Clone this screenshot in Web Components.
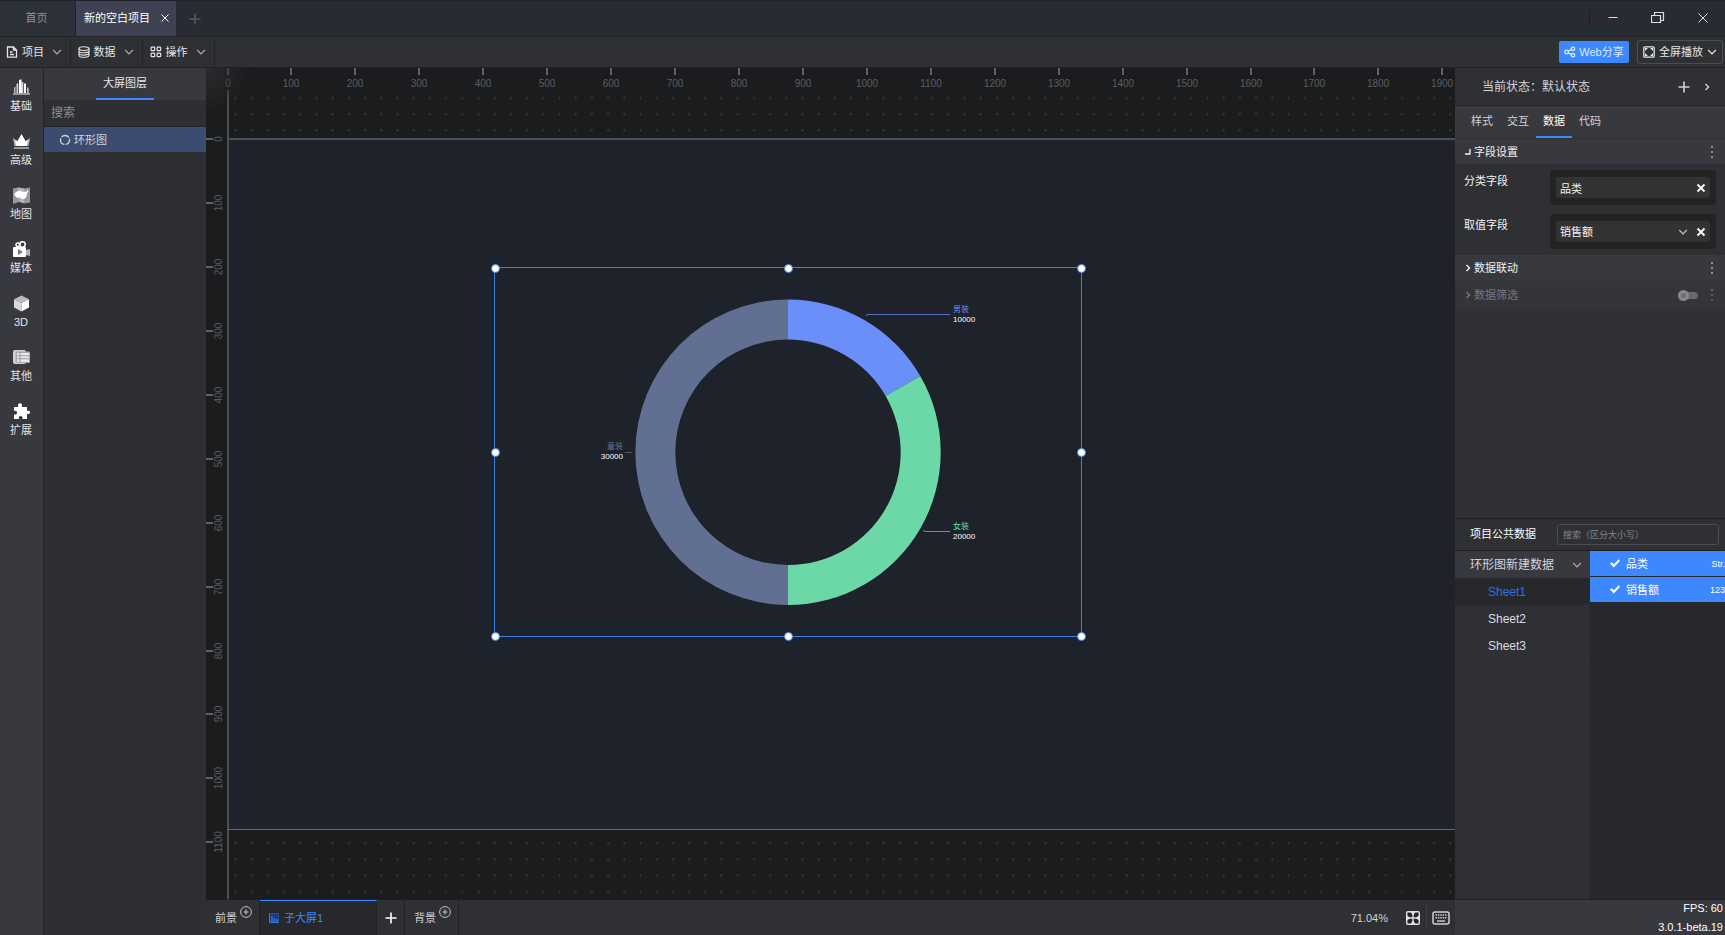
<!DOCTYPE html>
<html lang="zh-CN">
<head>
<meta charset="utf-8">
<meta name="viewport" content="width=device-width, initial-scale=1">
<title>新的空白项目</title>
<style>
  :root {
    --line: #232427;
    --panel: #2f3033;
    --raised: #38393f;
    --sunken: #27282c;
    --blue: #3d88ff;
    --dim: #8b8c90;
  }
  html, body {
    height: 100%;
    margin: 0;
    background: #2f3033;
    color: #d2d3d5;
    font: 11px/16px "Liberation Sans", "Noto Sans CJK SC", sans-serif;
  }
</style>
</head>
<body>
<app-shell>
  <title-bar slot="title"></title-bar>
  <tool-bar slot="tools"></tool-bar>
  <side-rail slot="rail"></side-rail>
  <layer-panel slot="layers"></layer-panel>
  <stage-view slot="stage">
    <select-frame><ring-chart></ring-chart></select-frame>
  </stage-view>
  <screen-tabs slot="screens"></screen-tabs>
  <props-panel slot="props"></props-panel>
  <data-panel slot="data"></data-panel>
  <status-box slot="status"></status-box>
</app-shell>

<script>
(function() {

  // name: [width, height, markup]
  const ICONS = {
    close: [10, 10, '<path d="M1.5 1.5l7 7M8.5 1.5l-7 7" fill="none" stroke="currentColor"/>'],
    exit: [12, 12, '<path d="M1.5 1.5l9 9M10.5 1.5l-9 9" fill="none" stroke="currentColor"/>'],
    cross: [10, 10, '<path d="M1.5 1.5l7 7M8.5 1.5l-7 7" fill="none" stroke="currentColor" stroke-width="2"/>'],
    plus: [12, 12, '<path d="M6 .5v11M.5 6h11" fill="none" stroke="currentColor" stroke-width="1.6"/>'],
    down: [10, 10, '<path d="M1.2 3l3.8 4 3.8-4" fill="none" stroke="currentColor" stroke-width="1.2"/>'],
    right: [6, 8, '<path d="M1.5 1l3 3-3 3" fill="none" stroke="currentColor" stroke-width="1.4"/>'],
    corner: [6, 8, '<path d="M5 1v5H0" fill="none" stroke="currentColor" stroke-width="1.4"/>'],
    more: [4, 12, '<g fill="currentColor"><rect x="1" y="0" width="2" height="2"/><rect x="1" y="5" width="2" height="2"/><rect x="1" y="10" width="2" height="2"/></g>'],
    min: [12, 12, '<path d="M1.5 5.5h9" stroke="currentColor"/>'],
    restore: [14, 14, '<path d="M.5 4.5h9v7h-9zM3.5 4V1.5h9v8H10" fill="none" stroke="currentColor" stroke-width="1.2"/>'],
    file: [12, 12, '<path d="M1.5 1h6l3 3v7.2h-9zM7.5 1v3h3M4 6h2.5M4 8.5h4" fill="none" stroke="currentColor" stroke-width="1.3"/>'],
    db: [12, 12, '<g fill="none" stroke="currentColor" stroke-width="1.1"><ellipse cx="6" cy="2.6" rx="5" ry="1.9"/><path d="M1 2.6v6.8c0 1 2.2 1.9 5 1.9s5-.9 5-1.9V2.6M1 5c0 1 2.2 1.8 5 1.8S11 6 11 5M1 7.3c0 1 2.2 1.8 5 1.8s5-.8 5-1.8"/></g>'],
    grid: [12, 12, '<g fill="none" stroke="currentColor" stroke-width="1.2"><rect x="1.1" y="1.1" width="3.6" height="3.6" rx=".8"/><rect x="7.1" y="1.1" width="3.6" height="3.6" rx=".8"/><rect x="1.1" y="7.1" width="3.6" height="3.6" rx=".8"/><rect x="7.1" y="7.1" width="3.6" height="3.6" rx=".8"/></g>'],
    share: [12, 12, '<g fill="none" stroke="currentColor" stroke-width="1.3"><circle cx="2.6" cy="6" r="1.8"/><circle cx="9" cy="2.8" r="1.7"/><circle cx="9" cy="9.2" r="1.7"/><path d="M4.2 5.2l3.2-1.6M4.2 6.8l3.2 1.6"/></g>'],
    full: [12, 12, '<rect x=".8" y=".8" width="10.4" height="10.4" rx="1" fill="none" stroke="currentColor" stroke-width="1.3"/><path fill="currentColor" d="M2 2h3L2 5zM10 2v3L7 2zM2 10V7l3 3zM10 10H7l3-3z"/>'],
    bars: [17, 17, '<path fill="#b9babd" d="M1 8.5l1.5-1V14H1zM14 8l1.8 1.5V14H14z"/><path fill="#d4d5d7" d="M3.5 5L5.2 4v10H3.5zM8.7 3h1.6v11H8.700z"/><path fill="#fff" d="M6 1.5L7 .5h1.5L9 14H6zM11 4.5h2V14h-2z"/><path fill="#98999d" d="M0 14h17v2H0z"/>'],
    crown: [17, 17, '<path fill="#b9babd" d="M0 5l4.5 3.5L8.5 3l4 5.5L17 5l-1.5 8h-14z"/><path fill="#fff" d="M8.5 1l4 7 2.5-1-1.5 6H3.5L2 7l2.5 1z"/><path fill="#98999d" d="M1 14h15v2H1z"/>'],
    map: [17, 17, '<path fill="#98999c" d="M0 1.5l5-1 6 1 6-1v15l-6 1-5-1.5-6 2z"/><path fill="#b4b5b8" d="M5 .5l6 1V16l-5-1.5z"/><path fill="#fff" d="M2.5 5.5l3-2 2.5.5 2 1 2-.5 1 .5 1.5-2 1 1.5-1.5 2-.5 3-2 2.5h-3l-1-1.5-3 .5-2.5-2-1-2z"/>'],
    media: [17, 17, '<g fill="none" stroke="#fff" stroke-width="1.5"><circle cx="4.8" cy="3.8" r="1.8"/><circle cx="9.5" cy="3.5" r="2.7"/></g><rect y="6" width="13" height="10" rx="1" fill="#fff"/><path fill="#b3b4b7" d="M13 9l4-1v7l-4-1z"/><path fill="#77787c" d="M5 8l5 3-5 3z"/>'],
    cube: [17, 17, '<path fill="#b9babd" d="M8.5.5L16 4.2 8.5 8 1 4.2z"/><path fill="#d9dadb" d="M1 4.2L8.5 8v8.5L1 12.5z"/><path fill="#fff" d="M16 4.2L8.5 8v8.5l7.5-4z"/>'],
    list: [17, 17, '<rect y="1" width="13" height="14" rx="2" fill="#cfd0d2"/><rect x="2.5" y="2.5" width="14.5" height="11.5" rx="1" fill="#a9aaad"/><path fill="#e8e8e9" d="M4 4h12v9H4z"/><path d="M4 6.8h12M4 9.8h12M7 4v9" stroke="#98999d" fill="none"/>'],
    puzzle: [17, 17, '<path fill="#fff" d="M1 4h4.3C4.3 1.7 5.4.3 7 .3S9.7 1.7 8.7 4H14v4c2-.8 3-.1 3 1.3s-1 2.1-3 1.4V16H9.500c.4-2-.4-3-1.8-3s-2.2 1-1.8 3H1v-4.5c2 .4 3-.4 3-1.8S3 7.5 1 8z"/>'],
    ring: [12, 12, '<circle cx="6" cy="6" r="4.5" fill="none" stroke="currentColor" stroke-width="1.3" stroke-dasharray="8.2 1.225" stroke-dashoffset="2"/>'],
    add: [12, 12, '<circle cx="6" cy="6" r="5.4" fill="none" stroke="currentColor"/><path d="M6 3.5v5M3.5 6h5" stroke="currentColor" stroke-width="1.2"/>'],
    chart: [10, 10, '<path fill="#1c3a70" d="M0 0h10v10H0z"/><path d="M.5 0v9.5H10" fill="none" stroke="#3a78e0"/><path d="M3 9V3M5.5 9V5M8 9V6" fill="none" stroke="#3a78e0" stroke-width="1.4"/><path d="M0 .5h9.5V10" fill="none" stroke="#26509c"/>'],
    fit: [14, 14, '<rect x=".7" y=".7" width="12.6" height="12.6" rx="1" fill="#232427" stroke="#dedfe1" stroke-width="1.4"/><path d="M7 2v10M2 7h10" stroke="#dedfe1" stroke-width="1.4"/><path fill="#dedfe1" d="M7 4.5L4.5 1h5zM7 9.5L4.5 13h5zM4.5 7L1 4.5v5zM9.5 7L13 4.5v5z"/>'],
    keys: [18, 14, '<rect x="1" y="1" width="16" height="12" rx="2" fill="none" stroke="#cfd0d2" stroke-width="1.5"/><path d="M3.5 4h11M3.5 6.8h11" stroke="#cfd0d2" stroke-width="1.4" stroke-dasharray="1.5 .9"/><path d="M5 10h8" stroke="#cfd0d2" stroke-width="1.4"/>']
  };

  function define(name, html, setup) {
    const template = document.createElement('template');
    template.innerHTML = html;
    customElements.define(name, class extends HTMLElement {
      constructor() {
        super();
        this.attachShadow({ mode: 'open' }).append(template.content.cloneNode(true));
      }
      connectedCallback() {
        setup && setup.call(this, this.shadowRoot);
      }
    });
  }

  // controls shared by every shadow root that needs them
  const base = `
    * { box-sizing: border-box; }
    button, input, select {
      margin: 0; padding: 0; border: 0; border-radius: 0;
      background: none; color: inherit; font: inherit; outline: none;
    }
    button { display: flex; align-items: center; justify-content: center; cursor: pointer; white-space: nowrap; }
    a { color: inherit; text-decoration: none; }
    nav, header, ul, li { margin: 0; padding: 0; list-style: none; }
  `;

  define('ui-icon', `
    <style>:host { display: inline-flex; flex: none; } svg { display: block; }</style>
  `, function(root) {
    const [w, h, art] = ICONS[this.getAttribute('name')];
    root.innerHTML += `<svg width="${w}" height="${h}" viewBox="0 0 ${w} ${h}" aria-hidden="true">${art}</svg>`;
  });

  define('app-shell', `
    <style>
      :host {
        display: grid;
        height: 100vh;
        grid-template: 37px 31px minmax(0, 1fr) / 44px 162px minmax(0, 1fr) 270px;
        overflow: hidden;
      }
      .top { grid-column: 1 / -1; display: grid; }
      .work, .side { display: flex; flex-direction: column; min-width: 0; min-height: 0; }
      .rail, .layers { display: grid; }
    </style>
    <div class="top"><slot name="title"></slot></div>
    <div class="top"><slot name="tools"></slot></div>
    <div class="rail"><slot name="rail"></slot></div>
    <div class="layers"><slot name="layers"></slot></div>
    <div class="work"><slot name="stage"></slot><slot name="screens"></slot></div>
    <div class="side"><slot name="props"></slot><slot name="data"></slot><slot name="status"></slot></div>
  `);

  define('title-bar', `
    <style>
      ${base}
      :host {
        display: flex;
        background: #282b33;
        border-top: 1px solid #222326;
        border-bottom: 1px solid var(--line);
        box-sizing: border-box;
      }
      .home { width: 76px; background: #2b3039; border-right: 1px solid var(--line); color: #929397; padding: 0 2px 2px 0; }
      .project { width: 100px; display: flex; align-items: center; justify-content: space-between; padding: 0 6px 2px 8px; background: #3f4252; color: #fff; }
      .new { width: 38px; color: #56585e; }
      .window { display: flex; margin-left: auto; color: #dcdde0; align-items: center; }
      .window::before { content: ""; height: 17px; border-left: 1px solid #1d1f24; }
      .window button { width: 45px; height: 32px; padding-bottom: 1px; }
    </style>
    <button class="home">首页</button>
    <div class="project"><span>新的空白项目</span><button aria-label="关闭项目"><ui-icon name="close"></ui-icon></button></div>
    <button class="new" aria-label="新建"><ui-icon name="plus"></ui-icon></button>
    <div class="window">
      <button aria-label="最小化"><ui-icon name="min"></ui-icon></button>
      <button aria-label="还原"><ui-icon name="restore"></ui-icon></button>
      <button aria-label="关闭"><ui-icon name="exit"></ui-icon></button>
    </div>
  `);

  define('tool-bar', `
    <style>
      ${base}
      :host {
        display: flex;
        align-items: stretch;
        box-sizing: border-box;
        background: var(--panel);
        border-bottom: 1px solid #1f2022;
      }
      nav { display: flex; }
      nav button { width: 72px; gap: 4px; padding-right: 2px; border-right: 1px solid var(--line); color: #e4e5e7; }
      nav button:first-child { width: 71px; }
      nav ui-icon:last-child { margin-left: 4px; color: #a9aaad; }
      .actions { display: flex; align-items: center; gap: 8px; margin-left: auto; padding-right: 2px; }
      .share { width: 70px; height: 22px; gap: 3px; border-radius: 2px; background: var(--blue); color: #dfeaff; }
      .play { width: 86px; height: 24px; gap: 4px; border: 1px solid #4c4d51; border-radius: 3px; color: #e4e5e7; }
    </style>
    <nav>
      <button><ui-icon name="file"></ui-icon>项目<ui-icon name="down"></ui-icon></button>
      <button><ui-icon name="db"></ui-icon>数据<ui-icon name="down"></ui-icon></button>
      <button><ui-icon name="grid"></ui-icon>操作<ui-icon name="down"></ui-icon></button>
    </nav>
    <div class="actions">
      <button class="share"><ui-icon name="share"></ui-icon>Web分享</button>
      <button class="play"><ui-icon name="full"></ui-icon>全屏播放<ui-icon name="down"></ui-icon></button>
    </div>
  `);

  define('side-rail', `
    <style>
      ${base}
      :host { display: block; box-sizing: border-box; background: var(--raised); border-right: 1px solid var(--line); }
      button { flex-direction: column; width: 100%; height: 54px; gap: 2px; padding: 2px 1px 0 0; color: #e4e5e7; }
    </style>
    <nav></nav>
  `, function(root) {
    const items = [
      ['bars', '基础'], ['crown', '高级'], ['map', '地图'], ['media', '媒体'],
      ['cube', '3D'], ['list', '其他'], ['puzzle', '扩展']
    ];
    root.querySelector('nav').innerHTML = items
      .map(([icon, label]) => `<button><ui-icon name="${icon}"></ui-icon><span>${label}</span></button>`)
      .join('');
  });

  define('layer-panel', `
    <style>
      ${base}
      :host { display: block; background: #2e2f33; }
      header { display: flex; justify-content: center; height: 32px; background: var(--raised); }
      header button { width: 58px; border-bottom: 2px solid var(--blue); color: #e4e5e7; }
      input { display: block; width: 100%; height: 27px; padding: 0 7px; border-bottom: 1px solid var(--line); font-size: 12px; }
      input::placeholder { color: var(--dim); opacity: 1; }
      a { display: flex; align-items: center; gap: 3px; height: 25px; padding-left: 15px; background: #3c4c70; }
    </style>
    <header><button>大屏图层</button></header>
    <input type="search" aria-label="搜索" placeholder="搜索">
    <a href="#ring"><ui-icon name="ring"></ui-icon>环形图</a>
  `);

  define('stage-view', `
    <style>
      :host { display: block; position: relative; flex: 1; min-height: 0; overflow: hidden; background: #1b1c1d; border-bottom: 1px solid #1f2022; }
      svg { display: block; position: absolute; inset: 0; width: 100%; height: 100%; }
      text { font-size: 10px; fill: #5c5d5f; text-anchor: middle; }
      .tick { stroke: #5f6062; stroke-width: 2; }
      .corner {
        position: absolute; top: 0; left: 0; width: 44px; height: 44px;
        background: radial-gradient(circle at 0 0, #2a2b2d, #1b1c1d00 44px);
      }
      ::slotted(*) { position: absolute; left: 288px; top: 199px; }
    </style>
    <svg aria-hidden="true">
      <defs>
        <pattern id="dots" x="21.4" y="21.9" width="16.2" height="16.2" patternUnits="userSpaceOnUse">
          <circle cx="8.1" cy="8.1" r="1.1" fill="#3a3b3d"/>
        </pattern>
      </defs>
      <rect x="22" y="22" width="100%" height="100%" fill="url(#dots)"/>
      <rect class="page" fill="#1e222a"/>
      <g class="lines" fill="#4d4e50"></g>
      <g class="ruler"></g>
    </svg>
    <div class="corner"></div>
    <slot></slot>
  `, function(root) {
    const scale = .6394;
    const x0 = 22;
    const y0 = 71;
    const bottom = y0 + 1080 * scale;
    const page = root.querySelector('.page');
    page.setAttribute('x', x0);
    page.setAttribute('y', y0);
    page.setAttribute('width', 1920 * scale + 100);
    page.setAttribute('height', 1080 * scale);
    root.querySelector('.lines').innerHTML = `
      <rect x="${x0 - 1}" y="22" width="2" height="100%"/>
      <rect x="${x0}" y="${y0 - 1}" width="100%" height="2"/>
      <rect x="${x0}" y="${Math.floor(bottom)}" width="100%" height="1" fill="#66686b"/>
    `;
    let marks = '';
    for (let n = 0; n <= 1900; n += 100) {
      const x = Math.floor(x0 + n * scale);
      marks += `<path class="tick" d="M${x} 0v7"/><text x="${x}" y="19">${n}</text>`;
    }
    for (let n = 0; n <= 1100; n += 100) {
      const y = Math.round(y0 + n * scale);
      marks += `<path class="tick" d="M0 ${y}h7"/><text transform="translate(16 ${y}) rotate(-90)">${n}</text>`;
    }
    root.querySelector('.ruler').innerHTML = marks;
  });

  define('select-frame', `
    <style>
      :host { display: block; box-sizing: border-box; width: 588px; height: 370px; border: 1px solid #3f7fe6; }
      i {
        position: absolute; width: 9px; height: 9px; box-sizing: border-box; margin: -4px;
        border: 1px solid #3d7fe8; border-radius: 50%; background: #fff;
      }
    </style>
    <slot></slot>
  `, function(root) {
    [0, 50, 100].forEach(x => [0, 50, 100].forEach(y => {
      if (x === 50 && y === 50) {
        return;
      }
      const handle = document.createElement('i');
      handle.style.left = x + '%';
      handle.style.top = y + '%';
      root.append(handle);
    }));
  });

  define('ring-chart', `
    <style>
      :host { display: block; width: 100%; height: 100%; }
      svg { display: block; width: 100%; height: 100%; }
      text { font-size: 8px; }
      .value { fill: #fff; }
      .lead { fill: none; stroke-opacity: .7; }
    </style>
    <svg viewBox="0 0 586 368" role="img" aria-label="环形图"></svg>
  `, function(root) {
    const data = [
      { name: '男装', value: 10000, color: '#6a8ff9', at: [458, 44], anchor: 'start', lead: 'M371 48l1-1.5H455' },
      { name: '女装', value: 20000, color: '#6cd8a8', at: [458, 261], anchor: 'start', lead: 'M428 262l2 1.5H455' },
      { name: '童装', value: 30000, color: '#616f92', at: [128, 181], anchor: 'end', lead: 'M130 184.5h7' }
    ];
    const total = data.reduce((sum, d) => sum + d.value, 0);
    const point = (r, a) => `${293 + r * Math.sin(a)} ${184.3 - r * Math.cos(a)}`;
    const outer = 152.7;
    const inner = 112.7;
    let start = 0;
    root.querySelector('svg').innerHTML = data.map(d => {
      const end = start + d.value / total * Math.PI * 2;
      const arc = `
        <path fill="${d.color}" d="M${point(outer, start)}A${outer} ${outer} 0 0 1 ${point(outer, end)}
          L${point(inner, end)}A${inner} ${inner} 0 0 0 ${point(inner, start)}z"/>
        <path class="lead" stroke="${d.color}" d="${d.lead}"/>
        <text x="${d.at[0]}" y="${d.at[1]}" fill="${d.color}" text-anchor="${d.anchor}">${d.name}</text>
        <text class="value" x="${d.at[0]}" y="${d.at[1] + 10}" text-anchor="${d.anchor}">${d.value}</text>`;
      start = end;
      return arc;
    }).join('');
  });

  define('screen-tabs', `
    <style>
      ${base}
      :host { display: flex; flex: none; height: 35px; background: var(--panel); }
      button { border-right: 1px solid var(--line); }
      .ground { width: 54px; gap: 3px; padding-left: 2px; }
      .ground ui-icon { align-self: flex-start; margin-top: 6px; color: #c2c3c5; }
      .screen { width: 117px; justify-content: flex-start; gap: 5px; padding-left: 9px; background: var(--sunken); border-top: 1px solid var(--blue); color: var(--blue); }
      .new { width: 28px; color: #fff; }
      .zoom { display: flex; align-items: center; margin-left: auto; padding-right: 1px; }
      .zoom output { margin-right: 12px; }
      .zoom button { height: 27px; border: 0; }
      .zoom button:last-child { width: 28px; border-left: 1px solid #3d3e42; }
      .zoom button:nth-child(2) { width: 26px; }
    </style>
    <button class="ground">前景<ui-icon name="add"></ui-icon></button>
    <button class="screen"><ui-icon name="chart"></ui-icon>子大屏1</button>
    <button class="new" aria-label="添加子大屏"><ui-icon name="plus"></ui-icon></button>
    <button class="ground">背景<ui-icon name="add"></ui-icon></button>
    <div class="zoom">
      <output>71.04%</output>
      <button aria-label="适应窗口"><ui-icon name="fit"></ui-icon></button>
      <button aria-label="快捷键"><ui-icon name="keys"></ui-icon></button>
    </div>
  `);

  define('section-head', `
    <style>
      ${base}
      :host { display: flex; align-items: center; height: 26px; padding: 0 11px 0 10px; background: var(--raised); color: #f0f0f1; }
      :host([off]) { height: 28px; background: #343539; color: #77787c; }
      .fold { gap: 3px; }
      .more { margin-left: 12px; color: #919296; }
      :host([off]) .more { color: #5c5d61; }
      .end { margin-left: auto; display: flex; }
    </style>
    <button class="fold"><ui-icon name="right"></ui-icon><slot></slot></button>
    <span class="end"><slot name="end"></slot></span>
    <button class="more" aria-label="更多"><ui-icon name="more"></ui-icon></button>
  `, function(root) {
    if (this.hasAttribute('open')) {
      root.querySelector('.fold').firstElementChild.remove();
      root.querySelector('.fold').insertAdjacentHTML('afterbegin', '<ui-icon name="corner"></ui-icon>');
    }
  });

  define('field-row', `
    <style>
      ${base}
      :host { display: flex; justify-content: space-between; align-items: flex-start; color: #f4f4f5; }
      label { line-height: 22px; }
      .well { display: flex; width: 166px; height: 35px; padding: 7px 6px; border-radius: 4px; background: #232323; }
      .chip { display: flex; flex: 1; align-items: center; padding: 0 4px; border-radius: 3px; background: #333334; }
      .pick { display: flex; flex: 1; align-items: center; margin-right: 8px; }
      .pick ui-icon { color: #bfc0c2; }
      input, select { appearance: none; flex: 1; width: 0; height: 21px; }
    </style>
    <label for="field"></label>
    <div class="well"><div class="chip">
      <span class="pick"></span>
      <button aria-label="清除"><ui-icon name="cross"></ui-icon></button>
    </div></div>
  `, function(root) {
    const value = this.getAttribute('value');
    root.querySelector('label').textContent = this.getAttribute('label');
    root.querySelector('.pick').innerHTML = this.hasAttribute('menu')
      ? `<select id="field"><option>${value}</option></select><ui-icon name="down"></ui-icon>`
      : `<input id="field" readonly value="${value}">`;
  });

  define('props-panel', `
    <style>
      ${base}
      :host { display: block; flex: none; height: calc(100% - 417px); min-height: 250px; background: var(--panel); }
      .state { display: flex; align-items: center; height: 38px; padding: 0 15px 0 27px; border-bottom: 1px solid var(--line); font-size: 12px; }
      .state button:first-of-type { margin-left: auto; margin-right: 14px; }
      nav { display: flex; height: 32px; padding-left: 9px; background: var(--raised); }
      nav button { width: 36px; border-bottom: 2px solid transparent; }
      nav .on { border-color: var(--blue); color: #fff; }
      .fields { display: grid; gap: 9px; padding: 6px 9px; }
      section-head:first-of-type { border-top: 1px solid #303135; }
      .switch {
        appearance: none; width: 20px; height: 7px; border-radius: 4px; background: #68696c;
        display: flex; align-items: center;
      }
      .switch::before {
        content: ""; flex: none; box-sizing: border-box; width: 11px; height: 11px;
        border: 3px solid #88898c; border-radius: 50%; background: #6f7073;
      }
    </style>
    <div class="state">
      <span>当前状态：默认状态</span>
      <button aria-label="添加状态"><ui-icon name="plus"></ui-icon></button>
      <button aria-label="展开"><ui-icon name="right"></ui-icon></button>
    </div>
    <nav><button>样式</button><button>交互</button><button class="on">数据</button><button>代码</button></nav>
    <section-head open>字段设置</section-head>
    <div class="fields">
      <field-row label="分类字段" value="品类"></field-row>
      <field-row label="取值字段" value="销售额" menu></field-row>
    </div>
    <section-head>数据联动</section-head>
    <section-head off>数据筛选<input slot="end" class="switch" type="checkbox" aria-label="数据筛选"></section-head>
  `);

  define('data-panel', `
    <style>
      ${base}
      :host { display: flex; flex-direction: column; flex: 1; min-height: 0; background: var(--panel); border-top: 1px solid #1f2022; }
      header { display: flex; align-items: center; justify-content: space-between; height: 32px; padding: 0 6px 0 15px; border-bottom: 1px solid #1f2022; color: #fff; }
      header label { padding-bottom: 1px; }
      header input { width: 162px; height: 21px; padding: 0 5px; border: 1px solid #4c4d51; border-radius: 3px; font-size: 9px; }
      header input::placeholder { color: #85868a; opacity: 1; }
      .body { display: grid; grid-template-columns: 1fr 1fr; flex: 1; font-size: 12px; }
      .source { display: flex; align-items: center; justify-content: space-between; width: 100%; height: 27px; padding: 0 8px 0 15px; background: var(--raised); }
      .source ui-icon { color: #a9aaad; }
      li a { display: flex; align-items: center; height: 27px; padding-left: 33px; color: #dcdde0; }
      li a.on { background: var(--sunken); color: #2f6fe0; }
      ul { border-bottom: 1px solid #343539; }
      .columns { background: var(--sunken); font-size: 11px; color: #fff; overflow: hidden; }
      .columns label { display: flex; align-items: center; gap: 6px; height: 25px; margin-bottom: 1px; padding-left: 20px; background: var(--blue); }
      .columns small { margin-left: auto; font-size: 9px; }
      .columns input {
        appearance: none; width: 10px; height: 10px; background: #fff;
        clip-path: polygon(0 50%, 15% 35%, 38% 58%, 88% 8%, 100% 22%, 38% 90%);
      }
    </style>
    <header><label for="find">项目公共数据</label><input id="find" placeholder="搜索（区分大小写）"></header>
    <div class="body">
      <div>
        <button class="source">环形图新建数据<ui-icon name="down"></ui-icon></button>
        <ul>
          <li><a class="on" href="#sheet1">Sheet1</a></li>
          <li><a href="#sheet2">Sheet2</a></li>
          <li><a href="#sheet3">Sheet3</a></li>
        </ul>
      </div>
      <div class="columns">
        <label><input type="checkbox" checked>品类<small>Str.</small></label>
        <label><input type="checkbox" checked>销售额<small>123</small></label>
      </div>
    </div>
  `);

  define('status-box', `
    <style>
      :host {
        display: flex; flex-direction: column; align-items: flex-end; justify-content: space-between; flex: none;
        box-sizing: border-box; height: 36px; padding-right: 2px;
        border-top: 1px solid #1f2022; background: var(--raised); color: #fff;
      }
    </style>
    <span>FPS: 60</span><span>3.0.1-beta.19</span>
  `);

}());
</script>
</body>
</html>
